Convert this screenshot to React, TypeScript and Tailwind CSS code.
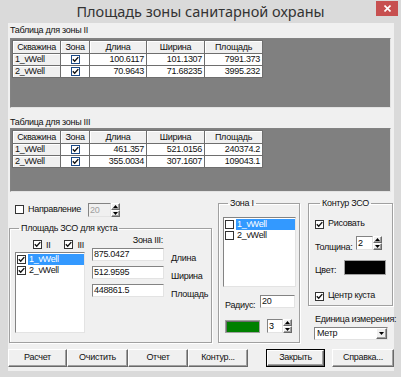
import React from 'react';

const zone2 = [
  ['1_vWell', '100.6117', '101.1307', '7991.373'],
  ['2_vWell', '70.9643', '71.68235', '3995.232'],
];
const zone3 = [
  ['1_vWell', '461.357', '521.0156', '240374.2'],
  ['2_vWell', '355.0034', '307.1607', '109043.1'],
];

const sunken = 'border border-t-[#838383] border-l-[#838383] border-b-[#e3e3e3] border-r-[#e3e3e3]';
const raised = 'bg-[#f0f0f0] border border-t-white border-l-white border-b-[#696969] border-r-[#696969] shadow-[inset_-1px_-1px_0_#a0a0a0]';

function Check({ checked, grid }: { checked?: boolean; grid?: boolean }) {
  return (
    <span className={`inline-flex items-center justify-center w-[9px] h-[9px] shrink-0 bg-white border ${grid ? 'border-[#1d4a87]' : 'border-[#333]'}`}>
      {checked && (
        <svg width="7" height="7" viewBox="0 0 7 7">
          <path d="M0.8 3.3 L2.7 5.3 L6.3 1.1" stroke="#111" strokeWidth="1.4" fill="none" />
        </svg>
      )}
    </span>
  );
}

function Arrow({ up }: { up?: boolean }) {
  return (
    <svg width="5" height="3" viewBox="0 0 5 3">
      <path d={up ? 'M0 3 L2.5 0 L5 3 Z' : 'M0 0 L5 0 L2.5 3 Z'} fill="#000" />
    </svg>
  );
}

function Spin({ value, field, disabled }: { value: string; field: string; disabled?: boolean }) {
  return (
    <div className="flex h-[14px]">
      <div className={`${field} h-full ${sunken} ${disabled ? 'bg-[#f0f0f0] text-[#a0a0a0]' : 'bg-white text-black'} pl-[1px] leading-[12px]`}>{value}</div>
      <div className="flex flex-col w-[9px] h-full">
        <div className={`flex-1 flex items-center justify-center ${raised}`}><Arrow up /></div>
        <div className={`flex-1 flex items-center justify-center ${raised}`}><Arrow /></div>
      </div>
    </div>
  );
}

function Grid({ rows, height }: { rows: string[][]; height: string }) {
  const head = ['Скважина', 'Зона', 'Длина', 'Ширина', 'Площадь'];
  const cell = 'border-r border-b border-[#6e6e6e] leading-[11px] overflow-hidden whitespace-nowrap';
  return (
    <div className={`ml-[2px] w-[381px] ${height} bg-[#808080] ${sunken} pl-[1px] pt-[1px]`}>
      <div className="grid grid-cols-[48px_29px_57px_58px_58px] grid-rows-[13px_12px_12px] w-fit border-l border-t border-[#6e6e6e]">
        {head.map((h) => (
          <div key={h} className={`${cell} bg-[#f0f0f0] text-center pt-[1px] shadow-[inset_1px_1px_0_#fff]`}>{h}</div>
        ))}
        {rows.map((r) => (
          <React.Fragment key={r[0]}>
            <div className={`${cell} bg-[#f0f0f0] pl-[2px] shadow-[inset_1px_1px_0_#fff]`}>{r[0]}</div>
            <div className={`${cell} bg-white flex justify-center items-center`}><Check checked grid /></div>
            <div className={`${cell} bg-white text-right pr-[2px]`}>{r[1]}</div>
            <div className={`${cell} bg-white text-right pr-[2px]`}>{r[2]}</div>
            <div className={`${cell} bg-white text-right pr-[2px]`}>{r[3]}</div>
          </React.Fragment>
        ))}
      </div>
    </div>
  );
}

function WellList({ className, checked }: { className: string; checked?: boolean }) {
  return (
    <div className={`${className} bg-white ${sunken} pl-[1px] pt-[1px]`}>
      {['1_vWell', '2_vWell'].map((w, i) => (
        <div key={w} className="flex items-center h-[11px]">
          <Check checked={checked} />
          <span className={`ml-[2px] flex-1 pl-[1px] leading-[11px] ${i === 0 ? 'bg-[#3399ff] text-white' : ''}`}>{w}</span>
        </div>
      ))}
    </div>
  );
}

function Btn({ label, className, def }: { label: string; className: string; def?: boolean }) {
  return (
    <div className={`${className} h-[18px] ${def ? 'border border-black' : ''}`}>
      <div className={`h-full flex items-center justify-center ${raised}`}>{label}</div>
    </div>
  );
}

const groupBorder = 'border border-[#a0a0a0] shadow-[1px_1px_0_#fff,inset_1px_1px_0_#fff]';

export default function App() {
  return (
    <div className="w-[401px] h-[377px] bg-[#dadada] flex flex-col font-['Liberation_Sans',Arial,sans-serif] text-[9px] tracking-[-0.3px] text-[#111]">
      {/* TITLE BAR */}
      <div className="h-[23px] flex items-start shrink-0 tracking-normal">
        <div className="w-[40px]" />
        <div className="flex-1 text-center font-['Noto_Sans',sans-serif] text-[14.5px] leading-[22px] text-[#333]">Площадь зоны санитарной охраны</div>
        <div className="w-[40px] flex justify-end pr-[3px] pt-[1px]">
          <div className="w-[22px] h-[15px] bg-[#c75050] flex items-center justify-center">
            <svg width="7" height="7" viewBox="0 0 7 7"><path d="M0.5 0.5 L6.5 6.5 M6.5 0.5 L0.5 6.5" stroke="#fff" strokeWidth="1.6" /></svg>
          </div>
        </div>
      </div>

      {/* CLIENT */}
      <div className="ml-[8px] w-[386px] h-[348px] bg-[#f0f0f0] flex flex-col">
        <div className="pl-[2px] pt-[1px] h-[15px] leading-[12px]">Таблица для зоны II</div>
        <Grid rows={zone2} height="h-[70px]" />
        <div className="pl-[2px] pt-[8px] h-[20px] leading-[12px]">Таблица для зоны III</div>
        <Grid rows={zone3} height="h-[64px]" />

        <div className="flex mt-[5px] h-[146px]">
          {/* LEFT */}
          <div className="ml-[1px] w-[203px] flex flex-col">
            <div className="mt-[6px] h-[13px] flex items-center pl-[6px]">
              <Check />
              <span className="ml-[4px]">Направление</span>
              <div className="ml-[7px]"><Spin value="20" field="w-[23px]" disabled /></div>
            </div>
            <fieldset className={`mt-[6px] h-[121px] ${groupBorder} pl-[5px]`}>
              <legend className="ml-[4px] px-[2px] leading-[12px]">Площадь ЗСО для куста</legend>
              <div className="flex">
                <div className="w-[70px] flex flex-col">
                  <div className="mt-[7px] h-[9px] flex items-center">
                    <div className="ml-[18px]"><Check checked /></div>
                    <span className="ml-[4px] leading-[9px]">II</span>
                    <div className="ml-[14px]"><Check checked /></div>
                    <span className="ml-[4px] leading-[9px]">III</span>
                  </div>
                  <WellList className="mt-[2px] h-[81px]" checked />
                </div>
                <div className="ml-[7px] flex flex-col">
                  <div className="w-[72px] text-right pr-[1px] leading-[12px]">Зона III:</div>
                  {[['875.0427', 'Длина'], ['512.9595', 'Ширина'], ['448861.5', 'Площадь']].map(([v, l], i) => (
                    <div key={l} className={`${i === 0 ? 'mt-[2px]' : 'mt-[5px]'} h-[13px] flex items-start`}>
                      <div className={`w-[72px] h-[13px] bg-white ${sunken} pl-[1px] leading-[11px]`}>{v}</div>
                      <span className="ml-[7px] mt-[4px] leading-[12px]">{l}</span>
                    </div>
                  ))}
                </div>
              </div>
            </fieldset>
          </div>

          {/* MIDDLE */}
          <fieldset className={`ml-[6px] w-[82px] h-[146px] ${groupBorder} pl-[4px]`}>
            <legend className="ml-[5px] px-[2px] leading-[12px]">Зона I</legend>
            <WellList className="mt-[8px] w-[73px] h-[70px]" />
            <div className="mt-[8px] h-[13px] flex items-start pl-[2px]">
              <span className="mt-[4px] leading-[12px] w-[35px]">Радиус:</span>
              <div className={`w-[35px] h-[13px] bg-white ${sunken} pl-[1px] leading-[11px]`}>20</div>
            </div>
            <div className="mt-[11px] h-[14px] flex items-center pl-[2px]">
              <div className="w-[35px] h-[13px] bg-[#008000] border border-[#a0a0a0] shadow-[inset_1px_1px_0_#6a6a6a]" />
              <div className="ml-[7px]"><Spin value="3" field="w-[16px]" /></div>
            </div>
          </fieldset>

          {/* RIGHT */}
          <div className="ml-[8px] w-[85px] flex flex-col">
            <fieldset className={`h-[109px] ${groupBorder} pl-[6px]`}>
              <legend className="ml-[5px] px-[2px] leading-[12px]">Контур ЗСО</legend>
              <div className="mt-[9px] h-[12px] flex items-center">
                <Check checked />
                <span className="ml-[4px]">Рисовать</span>
              </div>
              <div className="mt-[6px] h-[14px] flex items-start">
                <span className="mt-[5px] leading-[12px] w-[41px]">Толщина:</span>
                <Spin value="2" field="w-[17px]" />
              </div>
              <div className="mt-[10px] h-[15px] flex items-start">
                <span className="mt-[4px] leading-[12px] w-[29px]">Цвет:</span>
                <div className="w-[42px] h-[15px] bg-black border border-[#a0a0a0] shadow-[0_0_0_1px_#f0f0f0]" />
              </div>
              <div className="mt-[15px] h-[12px] flex items-center">
                <Check checked />
                <span className="ml-[4px]">Центр куста</span>
              </div>
            </fieldset>
            <div className="mt-[7px] ml-[7px] leading-[12px] whitespace-nowrap">Единица измерения:</div>
            <div className={`mt-[2px] ml-[6px] w-[74px] h-[13px] bg-white ${sunken} flex`}>
              <span className="flex-1 pl-[2px] leading-[11px]">Метр</span>
              <div className={`w-[11px] h-full flex items-center justify-center ${raised}`}><Arrow /></div>
            </div>
          </div>
        </div>

        {/* BUTTONS */}
        <div className="mt-[6px] flex">
          <Btn label="Расчет" className="w-[59px]" />
          <Btn label="Очистить" className="w-[61px]" />
          <Btn label="Отчет" className="w-[60px]" />
          <Btn label="Контур..." className="w-[60px]" />
          <Btn label="Закрыть" className="ml-[18px] w-[59px]" def />
          <Btn label="Справка..." className="ml-[7px] w-[62px]" />
        </div>
      </div>
    </div>
  );
}
